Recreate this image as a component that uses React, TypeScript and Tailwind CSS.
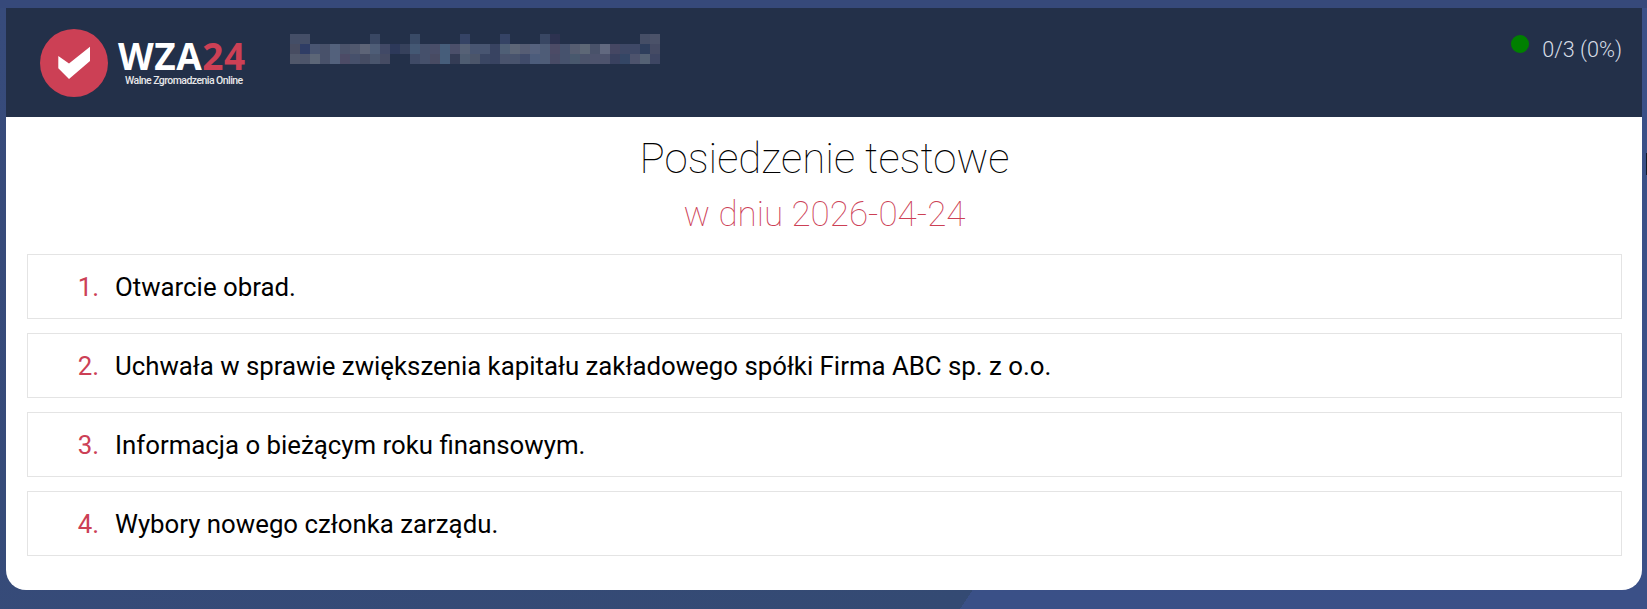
const font = "font-['Roboto',sans-serif]";

const punkty = [
  "Otwarcie obrad.",
  "Uchwała w sprawie zwiększenia kapitału zakładowego spółki Firma ABC sp. z o.o.",
  "Informacja o bieżącym roku finansowym.",
  "Wybory nowego członka zarządu.",
];

function Logo() {
  return (
    <div className="flex items-center">
      <svg width="68" height="68" viewBox="0 0 68 68" className="shrink-0">
        <circle cx="34" cy="34" r="34" fill="#cc4055" />
        <path d="M18.3 27 L29 34.5 L50 17.7 V32 L29 50 L18.3 39.3 Z" fill="#ffffff" />
      </svg>
      <div className="ml-[10px] flex flex-col items-start">
        <div className="font-['Open_Sans',sans-serif] text-[37px] leading-[32px] font-bold tracking-[0.5px] text-white">
          WZA<span className="text-[#cc4055]">24</span>
        </div>
        <div className="ml-[7px] mt-[2px] text-[10.5px] leading-[13px] font-medium text-[#e8e8ea] tracking-[-0.55px] whitespace-nowrap">
          Walne Zgromadzenia Online
        </div>
      </div>
    </div>
  );
}

function Rozmazane() {
  const gora = ["#4a546d", "#4a546d", "", "", "", "", "", "", "#3d4c68", "", "", "", "#3d4f6c", "", "", "", "", "#39476a", "", "", "", "#39476a", "", "", "", "#3c4a68", "#2f3352", "", "", "", "", "", "", "", "", "#4b546c", "#53596f"];
  const srodek = ["#4e5266", "#32406a", "#505c78", "#4f5770", "#5c6a86", "#535a72", "#585f75", "#686e80", "#566580", "#474e6c", "#2f3b5e", "#3a4560", "#4a5f7c", "#4c5672", "#50546f", "#4d6683", "#525570", "#606a7e", "#4f5c78", "#4f5c78", "#3c4766", "#57687f", "#687080", "#5f667c", "#606b88", "#566480", "#54506c", "#4d5874", "#5f6678", "#68717f", "#505870", "#6c7289", "#4c4c68", "#434d6c", "#434d6c", "#304160", "#4b5069"];
  const dol = ["#5a6072", "#555c72", "#677080", "#4f5770", "#5c6a86", "#54506c", "#4d5672", "#4c5268", "#505c74", "#4c5068", "", "", "#454f6c", "#4c5672", "#4f5068", "#4d6683", "#383f58", "#566478", "#525c70", "#3f4a68", "#3c4766", "#505a74", "#4f5a74", "#465070", "#546484", "#566480", "#4f506c", "#4d5874", "#4f6074", "#535a72", "#555a74", "#555a74", "#3d4563", "#384a6a", "#555a74", "#5d6a7c", "#434a68"];
  return (
    <div className="ml-[44px] self-start mt-[5px] flex flex-col opacity-85">
      {[gora, srodek, dol].map((rzad, r) => (
        <div key={r} className="flex">
          {rzad.map((kolor, i) => (
            <div key={i} className="h-[10px] w-[10px]" style={{ backgroundColor: kolor || "transparent" }} />
          ))}
        </div>
      ))}
    </div>
  );
}

export default function App() {
  return (
    <div className={`relative h-[609px] overflow-hidden bg-[linear-gradient(#36497a_0_8px,transparent_8px),linear-gradient(124.4deg,#374b7b_0px,#344a73_1136px,#3a5087_1136px,#3b5087_100%)] pl-[6px] pr-[5px] pt-[8px] ${font}`}>
      <div className="h-[582px] overflow-hidden rounded-b-[20px] bg-white">
        <header className="flex h-[109px] items-start justify-between bg-[#233049] pl-[34px] pr-[20px]">
          <div className="flex items-start pt-[21px]">
            <Logo />
            <Rozmazane />
          </div>
          <div className="flex items-start pt-[27px] text-[21.6px] leading-[24px] font-light text-[#d7dde6]">
            <span className="mr-[13px] h-[18px] w-[18px] rounded-full bg-[#008000]" />
            <span className="mt-[3px]">0/3 (0%)</span>
          </div>
        </header>

        <div className="pl-[21px] pr-[20px]">
          <h1 className="pt-[15px] text-center text-[42px] leading-[54px] font-thin text-black">
            Posiedzenie testowe
          </h1>
          <h2 className="mt-[10px] text-center text-[35px] leading-[38px] font-thin text-[#cc4055]">
            w dniu 2026-04-24
          </h2>

          <ol className="mt-[20px] flex flex-col gap-[14px]">
            {punkty.map((punkt, i) => (
              <li key={i} className="flex h-[65px] items-center border border-[#e4e4e4] pl-[36px] text-[25.8px] leading-[32px] text-black">
                <span className="w-[35px] text-right text-[#cc4055]">{i + 1}.</span>
                <span className="ml-[16px]">{punkt}</span>
              </li>
            ))}
          </ol>
        </div>
      </div>
      <div className="absolute right-0 top-[153px] h-[22px] w-[1px] bg-[#101828]" />
    </div>
  );
}
